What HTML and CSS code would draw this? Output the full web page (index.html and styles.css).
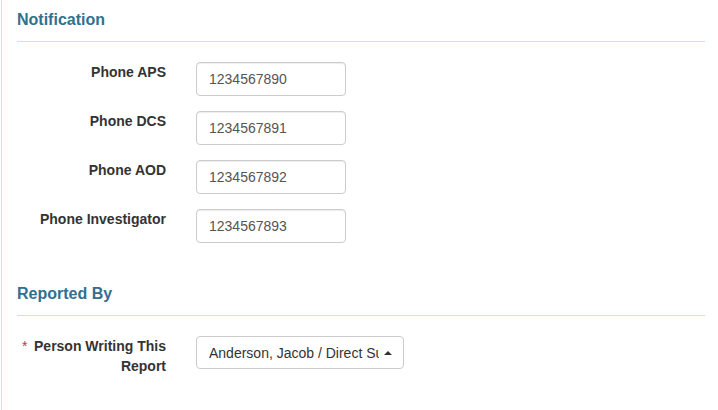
FILE: index.html
```html
<!DOCTYPE html>
<html lang="en">
<head>
  <meta charset="UTF-8" />
  <meta name="viewport" content="width=device-width, initial-scale=1.0"/>
  <title>Incident Report - Notification</title>
  <link rel="stylesheet" href="styles.css">
</head>
<body>
  <div class="panel">
    <div class="section">
      <h3 class="section-title">Notification</h3>
      <hr class="divider">
      <div class="form-group">
        <label class="form-label">Phone APS</label>
        <input class="form-control" type="text" value="1234567890">
      </div>
      <div class="form-group">
        <label class="form-label">Phone DCS</label>
        <input class="form-control" type="text" value="1234567891">
      </div>
      <div class="form-group">
        <label class="form-label">Phone AOD</label>
        <input class="form-control" type="text" value="1234567892">
      </div>
      <div class="form-group">
        <label class="form-label">Phone Investigator</label>
        <input class="form-control" type="text" value="1234567893">
      </div>
    </div>

    <div class="section">
      <h3 class="section-title">Reported By</h3>
      <hr class="divider">
      <div class="form-group">
        <label class="form-label required">
          <span class="req-mark">*</span>
          <span class="label-text">Person Writing This Report</span>
        </label>
        <div class="select-box">
          <span class="select-text">Anderson, Jacob / Direct Support Professional</span>
          <span class="caret"></span>
        </div>
      </div>
    </div>
  </div>
</body>
</html>
```

FILE: styles.css
```css
body {
  margin: 0;
  background-color: #fff;
  color: #333;
  font-family: "Liberation Sans", Arial, sans-serif;
  font-size: 14px;
  line-height: 20px;
}
.panel {
  margin-left: 1px;
  border-left: 1px solid #bce8f1;
  padding: 0 13px 0 15px;
  min-height: 100vh;
  box-sizing: border-box;
}
.section {
  padding: 10px 0 16px;
}
.section-title {
  margin: 0;
  font-size: 16px;
  font-weight: bold;
  line-height: 20px;
  color: #31708f;
}
.divider {
  border: 0;
  border-top: 1px solid #bce8f1;
  margin: 11px 0 20px;
}
.form-group {
  display: grid;
  grid-template-columns: 149px auto;
  column-gap: 30px;
  align-items: start;
  margin-bottom: 15px;
}
.form-label {
  font-weight: bold;
  text-align: right;
}
.form-label.required {
  display: flex;
}
.req-mark {
  padding-left: 5px;
  color: #a94442;
  font-weight: normal;
}
.label-text {
  flex: 1;
  text-align: right;
}
.form-control {
  width: 150px;
  height: 34px;
  box-sizing: border-box;
  padding: 6px 12px;
  border: 1px solid #ccc;
  border-radius: 4px;
  font-family: inherit;
  font-size: 14px;
  line-height: 20px;
  color: #555;
  box-shadow: inset 0 1px 1px rgba(0, 0, 0, 0.075);
}
.select-box {
  display: flex;
  align-items: center;
  width: 208px;
  height: 33px;
  box-sizing: border-box;
  padding: 0 11px 0 12px;
  border: 1px solid #ccc;
  border-radius: 4px;
  color: #333;
}
.select-text {
  width: 170px;
  overflow: hidden;
  white-space: nowrap;
}
.caret {
  margin-left: 5px;
  width: 0;
  height: 0;
  border-left: 4px solid transparent;
  border-right: 4px solid transparent;
  border-bottom: 4px solid #333;
}
```
